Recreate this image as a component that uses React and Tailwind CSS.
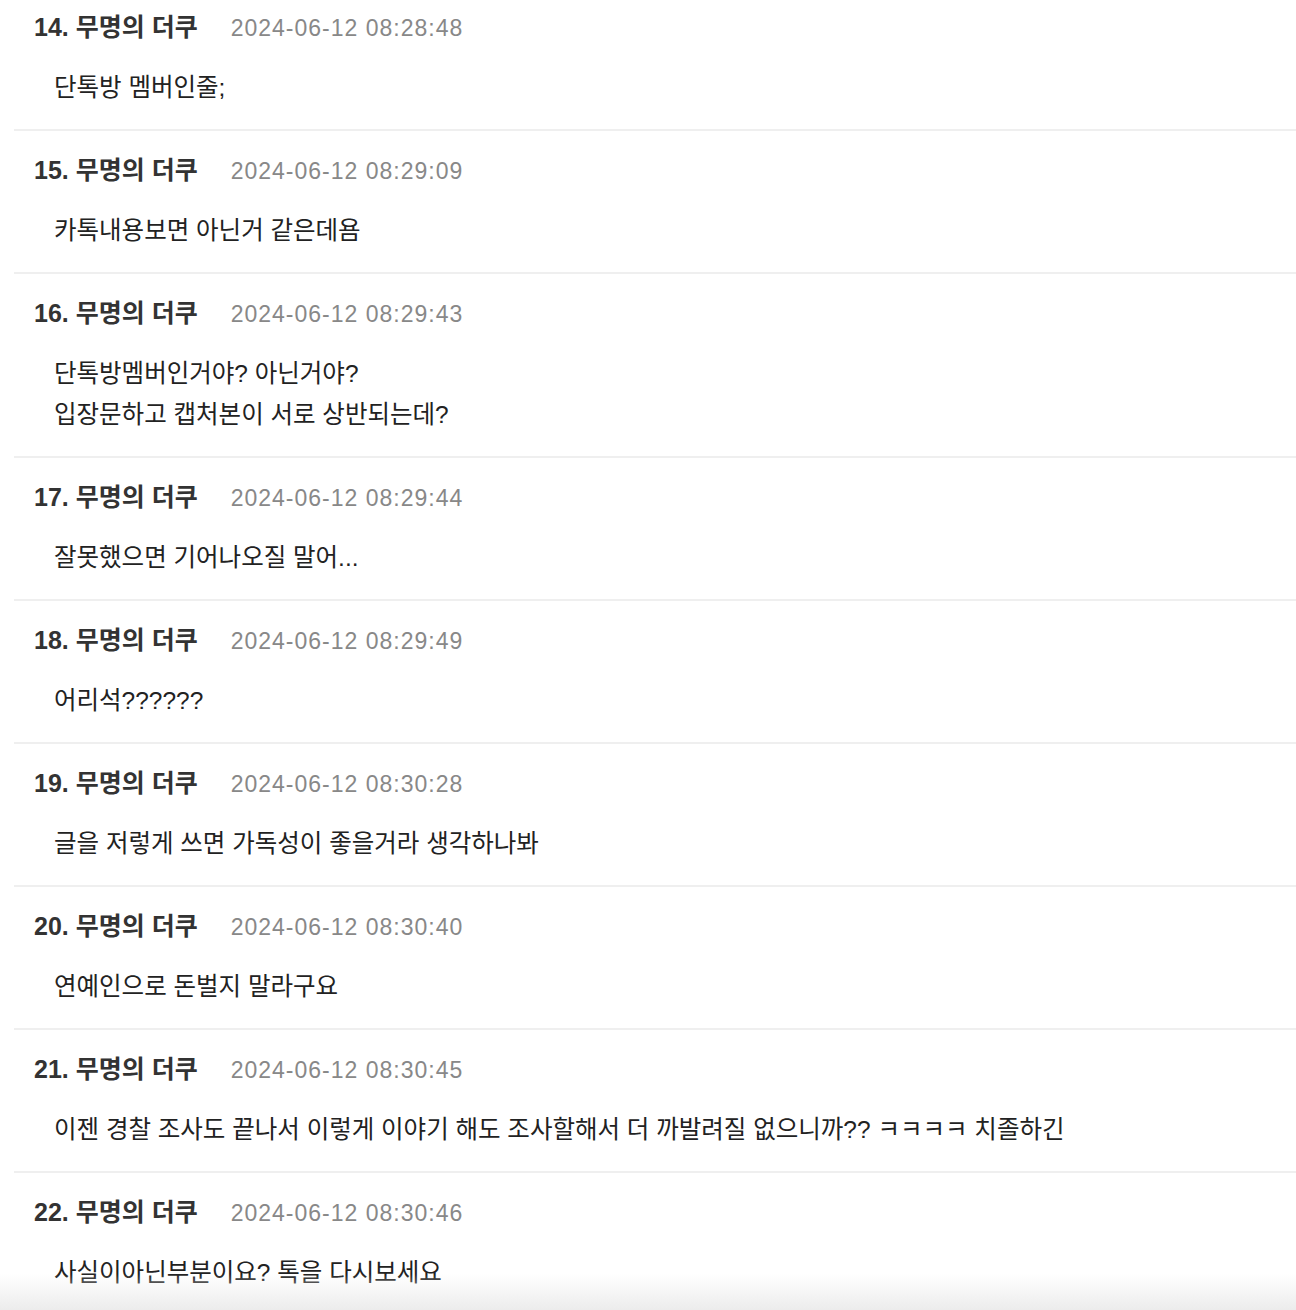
const comments = [
  { no: 14, time: '2024-06-12 08:28:48', lines: ['단톡방 멤버인줄;'] },
  { no: 15, time: '2024-06-12 08:29:09', lines: ['카톡내용보면 아닌거 같은데욤'] },
  { no: 16, time: '2024-06-12 08:29:43', lines: ['단톡방멤버인거야? 아닌거야?', '입장문하고 캡처본이 서로 상반되는데?'] },
  { no: 17, time: '2024-06-12 08:29:44', lines: ['잘못했으면 기어나오질 말어...'] },
  { no: 18, time: '2024-06-12 08:29:49', lines: ['어리석??????'] },
  { no: 19, time: '2024-06-12 08:30:28', lines: ['글을 저렇게 쓰면 가독성이 좋을거라 생각하나봐'] },
  { no: 20, time: '2024-06-12 08:30:40', lines: ['연예인으로 돈벌지 말라구요'] },
  { no: 21, time: '2024-06-12 08:30:45', lines: ['이젠 경찰 조사도 끝나서 이렇게 이야기 해도 조사할해서 더 까발려질 없으니까?? ㅋㅋㅋㅋ 치졸하긴'] },
  { no: 22, time: '2024-06-12 08:30:46', lines: ['사실이아닌부분이요? 톡을 다시보세요'] },
];

function Comment({ no, time, lines }) {
  return (
    <li className="border-b-2 border-[#efefef] pt-[23px] pb-[21px]">
      <div className="flex items-center h-[34px] pl-5">
        <span className="text-[25px] font-bold text-[#333]">{no}. 무명의 더쿠</span>
        <span className="ml-[33px] text-[23px] tracking-[1px] text-[#888]">{time}</span>
      </div>
      <div className="mt-[22px] pl-10 text-[24.5px] leading-[41px] text-[#222]">
        {lines.map((line) => (
          <p key={line}>{line}</p>
        ))}
      </div>
    </li>
  );
}

export default function App() {
  return (
    <div className="relative h-[1310px] overflow-hidden bg-white font-['Liberation_Sans','Noto_Sans_CJK_KR',sans-serif]">
      <ul className="pl-[14px] -mt-[12px]">
        {comments.map((c) => (
          <Comment key={c.no} {...c} />
        ))}
      </ul>
      {/* bottom fade */}
      <div className="pointer-events-none absolute bottom-0 left-0 right-0 h-[36px] bg-gradient-to-b from-white/0 to-[#ececec]" />
    </div>
  );
}
